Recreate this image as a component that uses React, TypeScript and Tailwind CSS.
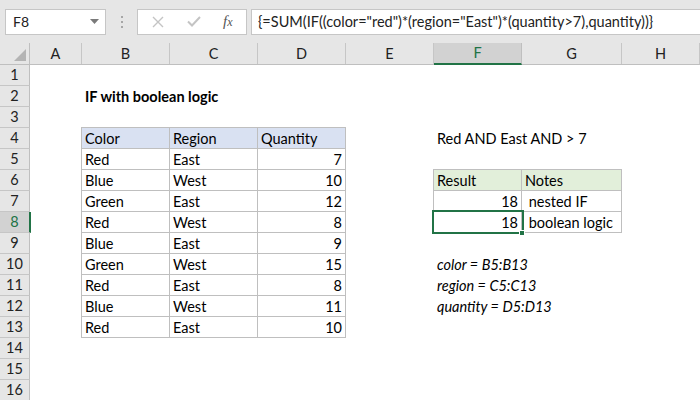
import React from 'react';

// Excel-style sheet: IF with boolean logic example

const font = { fontFamily: 'Lato, "Open Sans", sans-serif' };

const data: [string, string, number][] = [
  ['Red', 'East', 7],
  ['Blue', 'West', 10],
  ['Green', 'East', 12],
  ['Red', 'West', 8],
  ['Blue', 'East', 9],
  ['Green', 'West', 15],
  ['Red', 'East', 8],
  ['Blue', 'West', 11],
  ['Red', 'East', 10],
];

const columns = [
  { label: 'A', w: 'w-[52px]' },
  { label: 'B', w: 'w-[88px]' },
  { label: 'C', w: 'w-[88px]' },
  { label: 'D', w: 'w-[88px]' },
  { label: 'E', w: 'w-[88px]' },
  { label: 'F', w: 'w-[88px]' },
  { label: 'G', w: 'w-[100px]' },
  { label: 'H', w: 'flex-1' },
];

const FormulaBar: React.FC = () => (
  <div className="h-[43px] bg-[#e6e6e6] flex items-center">
    {/* Name box */}
    <div className="ml-[5px] w-[101px] h-[26px] bg-white border border-[#c6c6c6] flex items-center justify-between pl-[7px] pr-[6px]">
      <span className="text-[14px] text-[#222]">F8</span>
      <svg width="9" height="5" viewBox="0 0 9 5">
        <polygon points="0,0 9,0 4.5,5" fill="#7a7a7a" />
      </svg>
    </div>
    {/* grip dots */}
    <div className="w-[31px] flex flex-col items-center gap-[3px]">
      <span className="w-[2px] h-[2px] bg-[#a6a6a6]" />
      <span className="w-[2px] h-[2px] bg-[#a6a6a6]" />
      <span className="w-[2px] h-[2px] bg-[#a6a6a6]" />
    </div>
    {/* cancel / enter / fx */}
    <div className="w-[110px] h-[26px] bg-white border border-[#c6c6c6] flex items-center">
      <svg className="ml-[14px]" width="12" height="12" viewBox="0 0 12 12">
        <path d="M1 1 L11 11 M11 1 L1 11" stroke="#c4c4c4" strokeWidth="1.4" fill="none" />
      </svg>
      <svg className="ml-[23px]" width="14" height="11" viewBox="0 0 14 11">
        <path d="M1 5.5 L5 9.5 L13 1" stroke="#c4c4c4" strokeWidth="2" fill="none" />
      </svg>
      <span
        className="ml-[22px] text-[15px] italic text-[#555] leading-none"
        style={{ fontFamily: '"Liberation Serif", serif' }}
      >
        f<span className="text-[12px]">x</span>
      </span>
    </div>
    {/* formula text */}
    <div className="ml-[4px] flex-1 h-[26px] bg-white border border-r-0 border-[#c6c6c6] flex items-center pl-[6px] overflow-hidden">
      <span className="text-[14.5px] text-[#222] whitespace-nowrap">
        {'{=SUM(IF((color="red")*(region="East")*(quantity>7),quantity))}'}
      </span>
    </div>
  </div>
);

const ColumnHeaders: React.FC = () => (
  <div className="h-[22px] flex bg-[#e6e6e6] border-b border-[#bfbfbf]">
    <div className="w-[30px] h-full border-r border-[#bfbfbf] flex items-end justify-end pr-[3px] pb-[3px]">
      <svg width="12" height="12" viewBox="0 0 12 12">
        <polygon points="12,0 12,12 0,12" fill="#b4b4b4" />
      </svg>
    </div>
    {columns.map((c) =>
      c.label === 'F' ? (
        <div
          key={c.label}
          className={`${c.w} h-[22px] -mb-px bg-[#d2d2d2] border-r border-[#bfbfbf] border-b-2 border-b-[#217346] flex items-center justify-center text-[14.5px] text-[#217346]`}
        >
          {c.label}
        </div>
      ) : (
        <div
          key={c.label}
          className={`${c.w} h-full border-r border-[#c6c6c6] flex items-center justify-center text-[14.5px] text-[#222]`}
        >
          {c.label}
        </div>
      )
    )}
  </div>
);

const RowHeaders: React.FC = () => (
  <div className="w-[30px] flex flex-col">
    {Array.from({ length: 16 }, (_, i) => i + 1).map((n) =>
      n === 8 ? (
        <div
          key={n}
          className="h-[21px] -mr-px bg-[#d2d2d2] border-b border-[#c6c6c6] border-r-2 border-r-[#217346] flex items-center justify-center text-[14.5px] text-[#217346]"
        >
          {n}
        </div>
      ) : (
        <div
          key={n}
          className="h-[21px] bg-[#e6e6e6] border-b border-[#c6c6c6] border-r border-r-[#bfbfbf] flex items-center justify-center text-[14.5px] text-[#222]"
        >
          {n}
        </div>
      )
    )}
  </div>
);

const Cell: React.FC<{ children?: React.ReactNode; right?: boolean; className?: string }> = ({
  children,
  right,
  className = '',
}) => (
  <div
    className={`h-[21px] border-r border-b border-[#bfbfbf] leading-[22px] px-[3px] whitespace-nowrap ${
      right ? 'text-right' : ''
    } ${className}`}
  >
    {children}
  </div>
);

export default function App() {
  return (
    <div className="w-[700px] h-[400px] overflow-hidden bg-white text-[#000]" style={font}>
      <FormulaBar />
      <ColumnHeaders />
      <div className="flex">
        <RowHeaders />
        <div className="flex-1 grid grid-cols-[52px_88px_88px_88px_88px_88px_100px_1fr] grid-rows-[repeat(16,21px)] text-[14.5px]">
          {/* B2 title */}
          <div className="col-start-2 row-start-2 pl-[3px] leading-[22px] font-bold whitespace-nowrap">
            IF with boolean logic
          </div>

          {/* data table B4:D13 */}
          <div className="col-start-2 col-span-3 row-start-4 row-span-10 -ml-px -mt-px border-l border-t border-[#bfbfbf] grid grid-cols-3 self-start">
            <Cell className="bg-[#d9e1f2]">Color</Cell>
            <Cell className="bg-[#d9e1f2]">Region</Cell>
            <Cell className="bg-[#d9e1f2]">Quantity</Cell>
            {data.map(([color, region, qty], i) => (
              <React.Fragment key={i}>
                <Cell>{color}</Cell>
                <Cell>{region}</Cell>
                <Cell right>{qty}</Cell>
              </React.Fragment>
            ))}
          </div>

          {/* F4 label */}
          <div className="col-start-6 row-start-4 pl-[3px] leading-[22px] whitespace-nowrap">
            Red AND East AND &gt; 7
          </div>

          {/* result table F6:G8 */}
          <div className="col-start-6 col-span-2 row-start-6 row-span-3 -ml-px -mt-px border-l border-t border-[#bfbfbf] grid grid-cols-[88px_100px] self-start">
            <Cell className="bg-[#e2efda]">Result</Cell>
            <Cell className="bg-[#e2efda]">Notes</Cell>
            <Cell right>18</Cell>
            <Cell className="whitespace-pre"> nested IF</Cell>
            <Cell right className="relative">
              18
              <div className="absolute left-[-2px] top-[-2px] w-[92px] h-[24px] border-2 border-[#217346]" />
              <div className="absolute left-[85px] top-[18px] w-[6px] h-[6px] bg-[#217346] border border-white" />
            </Cell>
            <Cell className="whitespace-pre"> boolean logic</Cell>
          </div>

          {/* named ranges */}
          <div className="col-start-6 row-start-10 pl-[3px] leading-[22px] italic whitespace-nowrap">
            color = B5:B13
          </div>
          <div className="col-start-6 row-start-11 pl-[3px] leading-[22px] italic whitespace-nowrap">
            region = C5:C13
          </div>
          <div className="col-start-6 row-start-12 pl-[3px] leading-[22px] italic whitespace-nowrap">
            quantity = D5:D13
          </div>
        </div>
      </div>
    </div>
  );
}
